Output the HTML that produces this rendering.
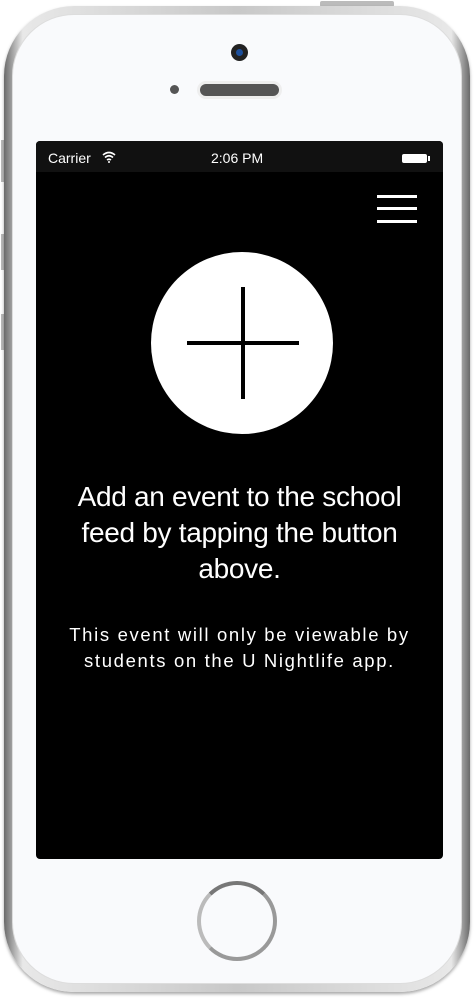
<!DOCTYPE html><html><head><style>
body{margin:0;width:476px;height:1000px;background:#fff;position:relative;overflow:hidden;font-family:"Liberation Sans",sans-serif}
.ph{position:absolute;left:4px;top:6px;width:466px;height:986px;border-radius:70px;background:linear-gradient(90deg,#6a6a6a,#e8e8e8 4%,#c8c8c8 50%,#e8e8e8 96%,#6a6a6a);box-shadow:0 2px 3px rgba(0,0,0,.35)}
.in{position:absolute;left:8px;top:8px;right:8px;bottom:8px;border-radius:62px;background:#f9fafc;border:1px solid #ddd}
.scr{position:absolute;left:36px;top:141px;width:407px;height:718px;background:#000;border-radius:4px;overflow:hidden;color:#fff}
.sb{height:31px;background:#111;font-size:14px;position:relative}
.btn{position:absolute;background:#bbb}
</style></head><body>
<div class="btn" style="left:320px;top:1px;width:74px;height:6px;border-radius:2px"></div>
<div class="btn" style="left:1px;top:140px;width:5px;height:42px"></div>
<div class="btn" style="left:1px;top:234px;width:5px;height:36px"></div>
<div class="btn" style="left:1px;top:314px;width:5px;height:36px"></div>
<div class="ph"><div class="in"></div></div>
<div style="position:absolute;left:231px;top:44px;width:17px;height:17px;border-radius:50%;background:#222"><div style="margin:5px;width:7px;height:7px;border-radius:50%;background:#1c4f9c"></div></div>
<div style="position:absolute;left:170px;top:85px;width:9px;height:9px;border-radius:50%;background:#555"></div>
<div style="position:absolute;left:200px;top:84px;width:79px;height:12px;border-radius:6px;background:#555;box-shadow:0 0 0 3px #eee"></div>
<div style="position:absolute;left:197px;top:881px;width:80px;height:80px;border-radius:50%;border:4px solid #999;box-sizing:border-box;border-top-color:#777;border-left-color:#bbb"></div>
<div class="scr">
<div class="sb"><span style="position:absolute;left:12px;top:9px">Carrier</span>
<svg style="position:absolute;left:66px;top:10px" width="14" height="12" viewBox="0 0 14 12"><path d="M1 4Q7-1 13 4M3 6.5Q7 3 11 6.5M5 9Q7 7.5 9 9" stroke="#fff" stroke-width="1.6" fill="none"/><circle cx="7" cy="11" r="1" fill="#fff"/></svg>
<span style="position:absolute;left:175px;top:9px">2:06 PM</span>
<div style="position:absolute;left:366px;top:13px;width:25px;height:9px;background:#fff;border-radius:2px"></div><div style="position:absolute;left:392px;top:15px;width:2px;height:5px;background:#fff"></div></div>
<div style="position:absolute;left:341px;top:54px;width:40px;height:3px;background:#fff"></div>
<div style="position:absolute;left:341px;top:66px;width:40px;height:3px;background:#fff"></div>
<div style="position:absolute;left:341px;top:79px;width:40px;height:3px;background:#fff"></div>
<div style="position:absolute;left:115px;top:111px;width:182px;height:182px;border-radius:50%;background:#fff"></div>
<div style="position:absolute;left:151px;top:200px;width:112px;height:4px;background:#000"></div>
<div style="position:absolute;left:205px;top:146px;width:4px;height:112px;background:#000"></div>
<div style="position:absolute;left:-20px;top:338px;width:447px;text-align:center;font-size:28px;line-height:36px;letter-spacing:-0.3px">Add an event to the school<br>feed by tapping the button<br>above.</div>
<div style="position:absolute;left:-20px;top:481px;width:447px;text-align:center;font-size:18.5px;line-height:26px;letter-spacing:1.65px">This event will only be viewable by<br>students on the U Nightlife app.</div>
</div>
</body></html>
